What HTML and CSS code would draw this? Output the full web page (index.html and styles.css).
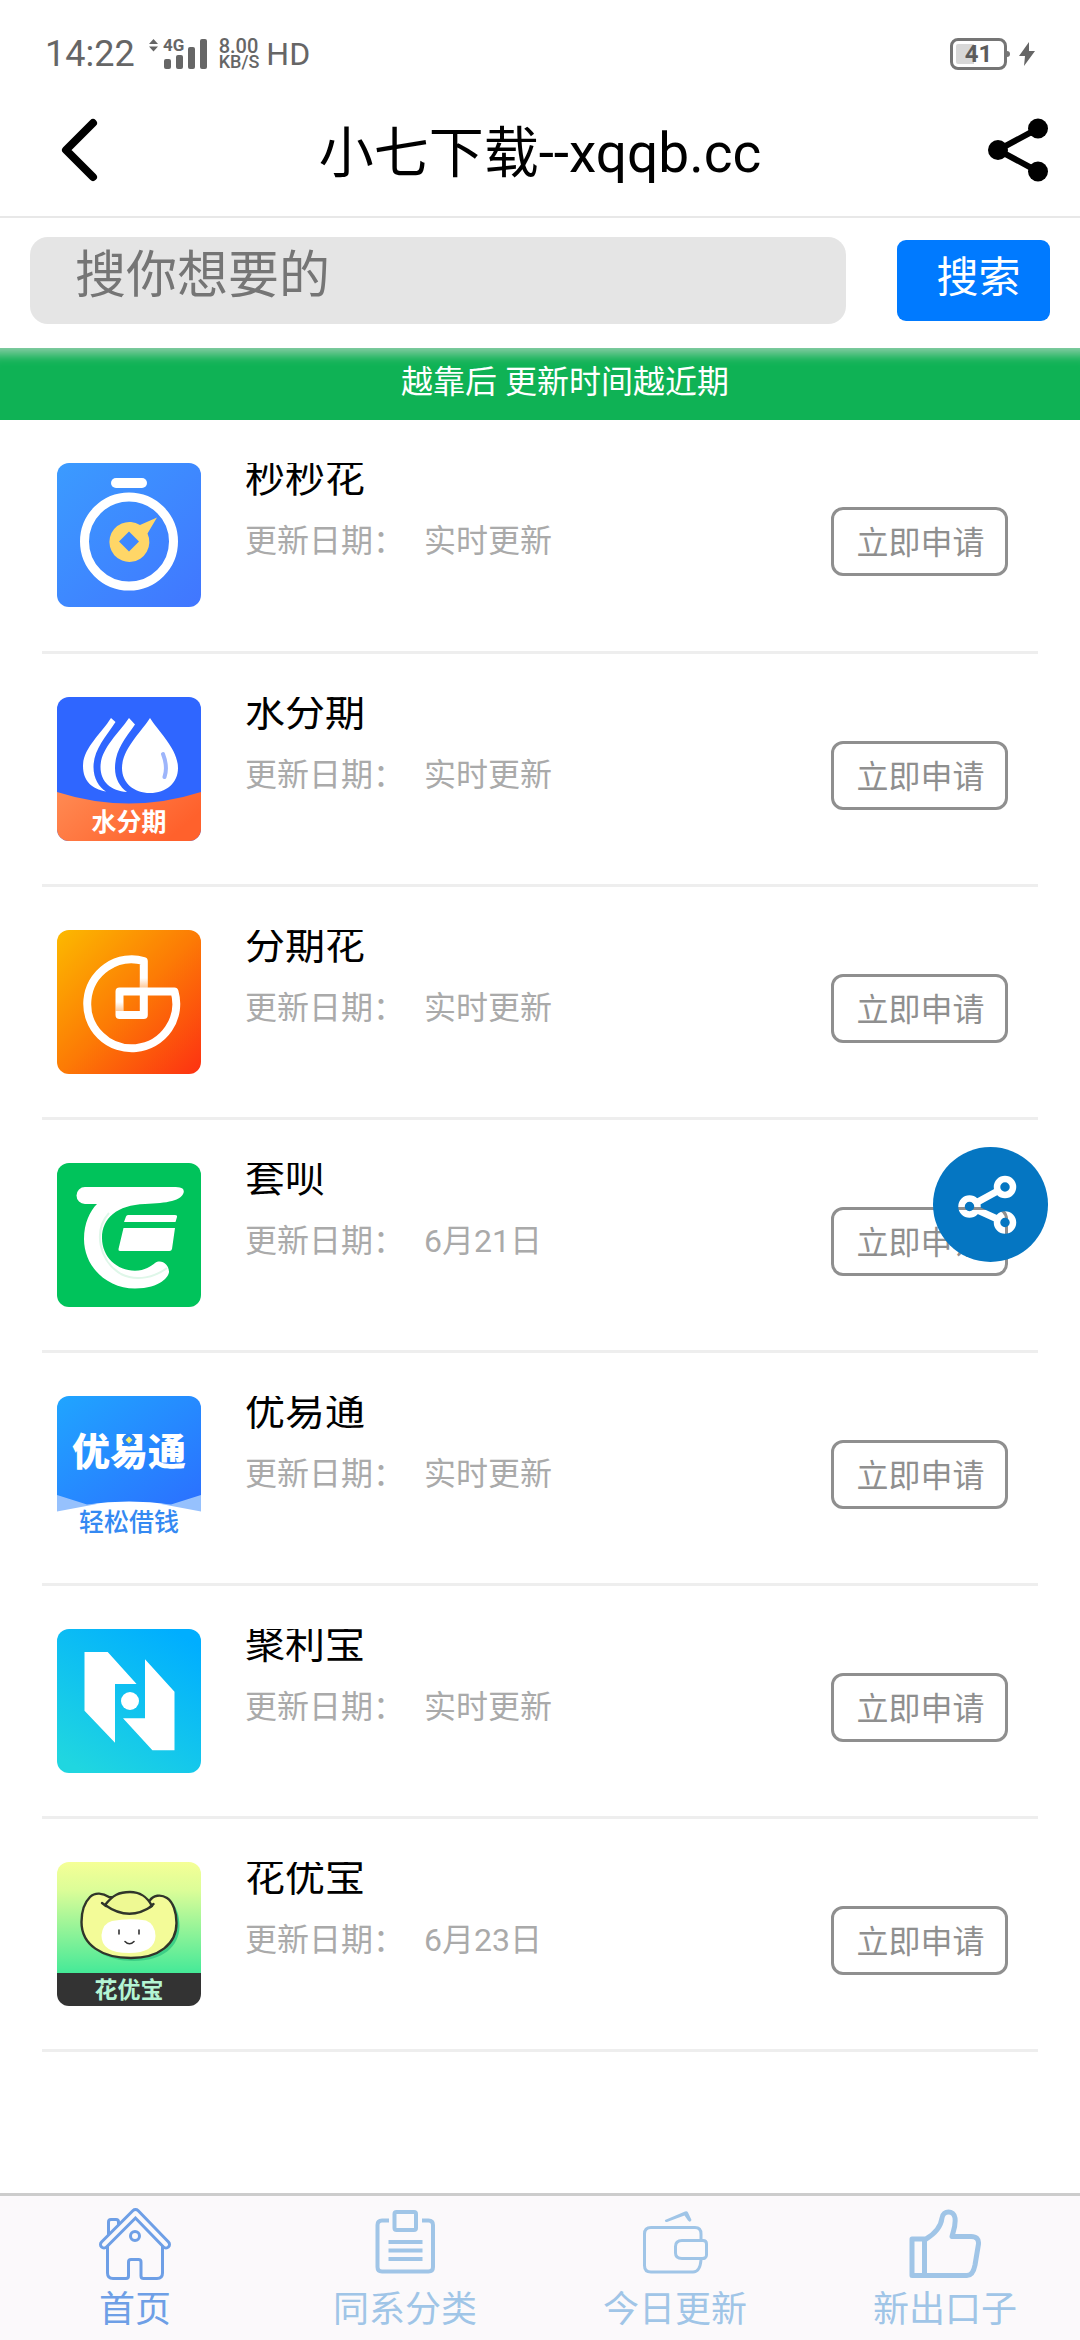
FILE: index.html
```html
<!DOCTYPE html>
<html lang="zh-CN">
<head>
<meta charset="utf-8">
<meta name="viewport" content="width=device-width, initial-scale=1">
<title>小七下载--xqqb.cc</title>
<link rel="stylesheet" href="styles.css">
</head>
<body>
<div class="status">
  <span class="status-time">14:22</span>
  <span class="status-signal">
    <svg width="58" height="32" viewBox="0 0 58 32" aria-hidden="true">
      <path d="M0 6 L4.500 1 L9 6Z M0 8.500 H9 L4.500 13.500Z"/>
      <rect x="15" y="21" width="7" height="10" rx="2"/>
      <rect x="27" y="17" width="7" height="14" rx="2"/>
      <rect x="39" y="9" width="7" height="22" rx="2"/>
      <rect x="51" y="1" width="7" height="30" rx="2"/>
      <text x="14" y="13">4G</text>
    </svg>
  </span>
  <span class="status-speed"><b>8.00</b><span>KB/S</span></span>
  <span class="status-hd">HD</span>
  <span class="battery"><span class="battery-text">41</span></span>
  <svg class="bolt" width="16" height="24" viewBox="0 0 16 24" aria-hidden="true"><path d="M10 0 L0 14 H6 L5 24 L16 9 H10Z"/></svg>
</div>

<header class="nav">
  <button class="nav-btn" type="button" aria-label="返回">
    <svg width="40" height="64" viewBox="0 0 40 64"><path d="M33 5 L6 32 L33 59" fill="none" stroke="#000" stroke-width="8" stroke-linecap="round" stroke-linejoin="round"/></svg>
  </button>
  <h1 class="nav-title">小七下载--xqqb.cc</h1>
  <button class="nav-btn" type="button" aria-label="分享">
    <svg width="60" height="64" viewBox="0 0 60 64"><path d="M50 10.500 L10 32 L50 53.500" fill="none" stroke="#000" stroke-width="6"/><circle cx="50" cy="10.500" r="10"/><circle cx="10" cy="32" r="10"/><circle cx="50" cy="53.500" r="10"/></svg>
  </button>
</header>

<form class="search">
  <input class="search-input" type="text" placeholder="搜你想要的" aria-label="搜你想要的">
  <button class="search-btn" type="button">搜索</button>
</form>

<p class="notice">越靠后 更新时间越近期</p>

<main class="main">
  <ul class="list">
    <li class="item">
      <svg class="logo" viewBox="0 0 144 144" aria-hidden="true">
        <defs><linearGradient id="g1" x1="0" y1="0" x2="1" y2="1"><stop offset="0" stop-color="#3b9bff"/><stop offset="1" stop-color="#4176ff"/></linearGradient></defs>
        <rect width="144" height="144" fill="url(#g1)"/>
        <rect x="54" y="15" width="36" height="10" rx="5" fill="#fff"/>
        <circle cx="72" cy="78.500" r="44.500" fill="none" stroke="#fff" stroke-width="9"/>
        <path fill="#ffd667" fill-rule="evenodd" d="M83 62 L100 54.500 L90.500 70.500 A20 20 0 1 1 83 62Z M72 68.500 L62 78.500 L72 88.500 L82 78.500Z"/>
      </svg>
      <div class="info"><h2 class="name">秒秒花</h2><p class="date"><span>更新日期：</span><span>实时更新</span></p></div>
      <button class="apply" type="button">立即申请</button>
    </li>
    <li class="item">
      <svg class="logo" viewBox="0 0 144 144" aria-hidden="true">
        <defs><linearGradient id="g2" x1="0" y1="0" x2="1" y2="0.400"><stop offset="0" stop-color="#ff8a52"/><stop offset="1" stop-color="#ff612c"/></linearGradient></defs>
        <rect width="144" height="144" fill="#2f66ff"/>
        <path d="M0 95 Q72 118 144 95 V144 H0Z" fill="url(#g2)"/>
        <path fill="#fff" d="M93 21 C101 34 121 52 121 71 C121 86 109 96 93 96 C77 96 65 86 65 71 C65 52 85 34 93 21Z"/>
        <path fill="#fff" d="M72 21 L78 27.500 C67 43 58 54 58 71 C58 82 63 90 70 95 C54 94 43.500 85 43.500 70 C43.500 52 61 37 72 21Z"/>
        <path fill="#fff" d="M54 21 L58.500 25 C48 41 36.500 53 36.500 70 C36.500 82 42 90 49 94.500 C35 92 26 84 26 69 C26 51 44 37 54 21Z"/>
        <path d="M106 57 Q111 70 107.500 80" fill="none" stroke="#9db5fb" stroke-width="4" stroke-linecap="round"/>
        <text class="logo-text logo-text-water" x="72" y="134">水分期</text>
      </svg>
      <div class="info"><h2 class="name">水分期</h2><p class="date"><span>更新日期：</span><span>实时更新</span></p></div>
      <button class="apply" type="button">立即申请</button>
    </li>
    <li class="item">
      <svg class="logo" viewBox="0 0 144 144" aria-hidden="true">
        <defs>
          <linearGradient id="g3" x1="0" y1="0" x2="1" y2="1"><stop offset="0" stop-color="#fcb900"/><stop offset="0.500" stop-color="#fc7b05"/><stop offset="1" stop-color="#fd3112"/></linearGradient>
          <linearGradient id="g3s" x1="0" y1="0" x2="0" y2="1"><stop offset="0" stop-color="#fc7b05" stop-opacity="0"/><stop offset="1" stop-color="#fc7b05" stop-opacity="0.400"/></linearGradient>
        </defs>
        <rect width="144" height="144" fill="url(#g3)"/>
        <path d="M117.500 61.500 H62.500 V85 H86.800 V31 A44.500 44.500 0 1 0 117.500 61.500Z" fill="none" stroke="#fff" stroke-width="8" stroke-linejoin="round"/>
        <rect x="83" y="48" width="8" height="9.500" fill="url(#g3s)"/>
        <rect x="58.500" y="72" width="8" height="9" fill="url(#g3s)"/>
      </svg>
      <div class="info"><h2 class="name">分期花</h2><p class="date"><span>更新日期：</span><span>实时更新</span></p></div>
      <button class="apply" type="button">立即申请</button>
    </li>
    <li class="item">
      <svg class="logo" viewBox="0 0 144 144" aria-hidden="true">
        <rect width="144" height="144" fill="#00c35b"/>
        <path fill="#fff" d="M28 24 H116 C124 24 127 25 126.800 29 C125 38 110 40 88 41 C60 42 45 55 45 75 C45 94 60 107.700 78 107.700 C88 107.700 94 103 98 100 C104 96 112 101 112 109 C112 113 104 125.500 78 125.500 C50 125.500 27 104 27 76 C27 60 33 48 40 41 H28 A8.500 8.500 0 0 1 28 24Z"/>
        <path d="M52 50 C36 68 42 98 64 111 C80 119 98 114 110 105" fill="none" stroke="#dff7e9" stroke-width="2"/>
        <path fill="#fff" d="M71 52 H118 Q120.500 52 120 54 L118.500 59 H67 L69 53.500 Q69.500 52 71 52Z M66.500 65 H118 L115 86 Q114.500 88 112.500 88 H63 Q61 88 61.500 86Z"/>
      </svg>
      <div class="info"><h2 class="name">套呗</h2><p class="date"><span>更新日期：</span><span>6月21日</span></p></div>
      <button class="apply" type="button">立即申请</button>
    </li>
    <li class="item">
      <svg class="logo" viewBox="0 0 144 144" aria-hidden="true">
        <defs><linearGradient id="g5" x1="0" y1="0" x2="1" y2="1"><stop offset="0" stop-color="#20a5ff"/><stop offset="1" stop-color="#2b70ff"/></linearGradient></defs>
        <rect width="144" height="144" fill="#fff"/>
        <path d="M0 98 L40 108 L0 115.500Z M144 98 L104 108 L144 115.500Z" fill="#96c1fd"/>
        <path d="M0 0 H144 V99 L114 108.500 Q72 102.500 30 108.500 L0 99Z" fill="url(#g5)"/>
        <text class="logo-text logo-text-yyt" x="72" y="69">优易通</text>
        <circle cx="72" cy="44" r="6.500" fill="#2686f5"/>
        <path d="M72 40.500 L75.500 44 L72 47.500 L68.500 44Z" fill="#f7ee6a"/>
        <text class="logo-text logo-text-loan" x="72" y="135">轻松借钱</text>
      </svg>
      <div class="info"><h2 class="name">优易通</h2><p class="date"><span>更新日期：</span><span>实时更新</span></p></div>
      <button class="apply" type="button">立即申请</button>
    </li>
    <li class="item">
      <svg class="logo" viewBox="0 0 144 144" aria-hidden="true">
        <defs><linearGradient id="g6" x1="0.800" y1="0" x2="0.200" y2="1"><stop offset="0" stop-color="#00aeff"/><stop offset="1" stop-color="#20d6e0"/></linearGradient></defs>
        <rect width="144" height="144" fill="url(#g6)"/>
        <path fill="#fff" d="M27.500 23 H50.700 L79.600 55 H58 V113.700 L27.500 81.700Z M88 30.300 L117.500 62.700 V121.300 H95.400 L66 89.300 H88Z"/>
        <circle cx="73" cy="72" r="9" fill="#fff"/>
      </svg>
      <div class="info"><h2 class="name">聚利宝</h2><p class="date"><span>更新日期：</span><span>实时更新</span></p></div>
      <button class="apply" type="button">立即申请</button>
    </li>
    <li class="item">
      <svg class="logo" viewBox="0 0 144 144" aria-hidden="true">
        <defs><linearGradient id="g7" x1="0" y1="0" x2="0" y2="1"><stop offset="0" stop-color="#f5ff96"/><stop offset="0.250" stop-color="#dcfd98"/><stop offset="1" stop-color="#43e998"/></linearGradient></defs>
        <rect width="144" height="112" fill="url(#g7)"/>
        <rect y="111" width="144" height="33" fill="#333"/>
        <path transform="translate(3 3)" fill="#3dcf86" d="M52 35 C46 31 38 30 33 35 C27 41 24.500 51 24.500 60 C24.500 83 45 96 74 96 C102 96 119.500 82 119.500 61 C119.500 50 116 40 110 36 C104 32 96 33 92.500 39Z"/>
        <g stroke="#30352a" stroke-width="2.400" stroke-linecap="round" stroke-linejoin="round">
          <path fill="#f3fb98" d="M52 35 C46 31 38 30 33 35 C27 41 24.500 51 24.500 60 C24.500 83 45 96 74 96 C102 96 119.500 82 119.500 61 C119.500 50 116 40 110 36 C104 32 96 33 92.500 39Z"/>
          <path fill="#eef993" d="M48 43 C56 33 62 30 73 30 C84 30 90 35 95 44 Q72 60 48 43Z"/>
          <path fill="none" d="M45 41 L49 44 M96.500 42 L93 45"/>
        </g>
        <path fill="#fff" d="M55 59 Q72 56 89 58.500 Q98 62 98.500 74 Q98 91 72 91 Q44 91 44.500 73 Q46 61 55 59Z"/>
        <path d="M62 68 V72 M82 68 V72 M68 79.500 Q72.500 84 77 79.500" fill="none" stroke="#333" stroke-width="1.600" stroke-linecap="round"/>
        <text class="logo-text logo-text-hyb" x="72" y="136">花优宝</text>
      </svg>
      <div class="info"><h2 class="name">花优宝</h2><p class="date"><span>更新日期：</span><span>6月23日</span></p></div>
      <button class="apply" type="button">立即申请</button>
    </li>
  </ul>
</main>

<button class="fab" type="button" aria-label="分享">
  <svg width="115" height="115" viewBox="0 0 115 115">
    <mask id="cut">
      <rect width="115" height="115" fill="#fff"/>
      <path d="M72 40 L36.500 59.500 L72 75.500" fill="none" stroke="#000" stroke-width="7"/>
      <g fill="#fff" stroke="#000" stroke-width="6.500"><circle cx="72" cy="40" r="8"/><circle cx="36.500" cy="59.500" r="8"/><circle cx="72" cy="75.500" r="8"/></g>
    </mask>
    <circle cx="57.500" cy="57.500" r="57.500" fill="#0576c2" mask="url(#cut)"/>
  </svg>
</button>

<nav class="tabs">
  <a class="tab tab-active" href="#home">
    <svg class="tab-icon" viewBox="0 0 72 72" aria-hidden="true">
      <g fill="none" stroke="currentColor" stroke-width="3">
        <path d="M9.500 27 V14 Q9.500 11.500 12 11.500 H17 Q19.500 11.500 19.500 14 V18"/>
        <path d="M8.500 37 V65 Q8.500 70.500 14 70.500 H27 Q29.500 70.500 29.500 68 V54 Q29.500 51.500 32 51.500 H39.500 Q42 51.500 42 54 V68 Q42 70.500 44.500 70.500 H58 Q63.500 70.500 63.500 65 V37"/>
        <circle cx="36" cy="28" r="4.500"/>
        <path stroke-width="10" stroke-linecap="round" stroke-linejoin="round" d="M5 36.500 L36.500 5 L67 36.500"/>
        <path class="tab-cut" stroke-width="4" stroke-linecap="round" stroke-linejoin="round" d="M5 36.500 L36.500 5 L67 36.500"/>
      </g>
    </svg>
    <span>首页</span>
  </a>
  <a class="tab" href="#category">
    <svg class="tab-icon" viewBox="0 0 72 72" aria-hidden="true">
      <g fill="none" stroke="currentColor" stroke-width="4">
        <path d="M20 12.500 H13 Q8.500 12.500 8.500 17 V59 Q8.500 63.500 13 63.500 H59.500 Q64 63.500 64 59 V17 Q64 12.500 59.500 12.500 H53 M19.500 34 H53.500 M19.500 42.500 H53.500 M19.500 51 H53.500"/>
        <rect x="25.500" y="4" width="21.500" height="18" rx="2"/>
      </g>
    </svg>
    <span>同系分类</span>
  </a>
  <a class="tab" href="#today">
    <svg class="tab-icon" viewBox="0 0 72 72" aria-hidden="true">
      <g fill="none" stroke="currentColor" stroke-width="3">
        <path d="M62 31.500 V26 Q62 19.500 56 19.500 H12 Q5.500 19.500 5.500 26 V57.500 Q5.500 64 12 64 H54 Q61 64 62 52"/>
        <path d="M43 32.500 H64 Q67.500 32.500 67.500 36 V47 Q67.500 51 62 50.500 H43 Q36.500 50.500 36.500 45 V38.500 Q36.500 32.500 43 32.500Z"/>
      </g>
      <path fill="currentColor" d="M26 12 L46 3.500 Q48 2.500 49 4.500 L52.500 12 Q51 15 49 12.500 L45.500 7.500 L28 14 Q25.500 14 26 12Z"/>
    </svg>
    <span>今日更新</span>
  </a>
  <a class="tab" href="#new">
    <svg class="tab-icon" viewBox="0 0 72 72" aria-hidden="true">
      <g fill="none" stroke="currentColor" stroke-width="5" stroke-linejoin="round">
        <path d="M3 31 H17 C27 25 32 18 33 10 C34 2 45 2 46 10 C47 18 44 24 43 28.500 H62 Q70 28.500 69.500 36 L66 57 Q64 67.500 58 67.500 H3Z"/>
        <path d="M15.500 32 V67"/>
      </g>
    </svg>
    <span>新出口子</span>
  </a>
</nav>
</body>
</html>
```

FILE: styles.css
```css
* {
  box-sizing: border-box;
}

body {
  display: flex;
  flex-direction: column;
  min-height: 100vh;
  margin: 0;
  background: #fff;
  color: #000;
  font-family: Roboto, "Noto Sans CJK SC", sans-serif;
}

h1, h2, p, ul {
  margin: 0;
  padding: 0;
  font-weight: 400;
}

button, input {
  font: inherit;
}

button {
  padding: 0;
  border: 0;
  background: none;
  color: inherit;
}

svg {
  display: block;
}

/* Status bar */
.status {
  display: flex;
  align-items: center;
  height: 84px;
  padding: 24px 45px 0;
  color: #666;
  font-size: 36px;
  line-height: 36px;
}

.status svg {
  overflow: visible;
  fill: #666;
}

.status-signal {
  margin-left: 14px;
}

.status-signal text {
  font-size: 17px;
  font-weight: 700;
}

.status-speed {
  display: flex;
  flex-direction: column;
  margin-left: 12px;
  font-size: 18px;
  font-weight: 500;
  line-height: 16px;
}

.status-speed b {
  font-size: 20px;
  font-weight: 500;
}

.status-hd {
  margin-left: 7px;
  font-size: 32px;
}

.battery {
  position: relative;
  width: 57px;
  height: 32px;
  margin-left: auto;
  padding: 3px;
  border: 3px solid #757575;
  border-radius: 8px;
  background: linear-gradient(90deg, #d8d8d8 41%, #fff 41%) content-box;
}

.battery::after {
  content: "";
  position: absolute;
  top: 10px;
  right: -6px;
  width: 3px;
  height: 6px;
  border-radius: 0 3px 3px 0;
  background: #757575;
}

.battery-text {
  display: block;
  color: #5c5c5c;
  font-size: 24px;
  font-weight: 700;
  line-height: 20px;
  text-align: center;
}

.bolt {
  margin-left: 12px;
}

/* Title bar */
.nav {
  display: flex;
  align-items: center;
  justify-content: space-between;
  height: 134px;
  padding: 0 32px 0 60px;
  border-bottom: 2px solid #e8e8e8;
}

.nav-btn {
  display: flex;
  flex: 0 0 60px;
}

.nav-title {
  padding: 5px 28px 0 0;
  font-size: 55px;
  line-height: 64px;
}

/* Search */
.search {
  display: flex;
  align-items: center;
  gap: 51px;
  height: 130px;
  padding: 0 30px 6px;
}

.search-input {
  flex: 1;
  min-width: 0;
  height: 87px;
  padding: 0 45px 10px;
  border: 0;
  border-radius: 18px;
  background: #e5e5e5;
  font-size: 51px;
}

.search-input::placeholder {
  color: #757575;
  opacity: 1;
}

.search-btn {
  width: 153px;
  height: 81px;
  padding: 0 0 14px 10px;
  border-radius: 9px;
  background: #007aff;
  color: #fff;
  font-size: 42px;
}

.notice {
  padding: 10px 0 14px 50px;
  background: #0fb255;
  box-shadow: inset 0 18px 12px -12px #8fceaa;
  color: #fff;
  font-size: 32px;
  line-height: 48px;
  text-align: center;
}

/* App list */
.main {
  flex: 1;
  padding: 0 42px;
}

.list {
  list-style: none;
}

.item {
  display: flex;
  height: 233px;
  padding: 43px 30px 0 15px;
  border-bottom: 3px solid #eee;
}

.item:first-child {
  height: 234px;
}

.logo {
  flex: none;
  width: 144px;
  height: 144px;
  border-radius: 12px;
}

.logo-text {
  font-family: "Noto Sans CJK SC", sans-serif;
  text-anchor: middle;
}

.logo-text-water {
  fill: #fff;
  font-size: 25px;
  font-weight: 700;
}

.logo-text-yyt {
  fill: #fff;
  font-size: 38px;
  font-weight: 900;
}

.logo-text-loan {
  fill: #3489f2;
  font-size: 25px;
  font-weight: 500;
}

.logo-text-hyb {
  fill: #b4f5d4;
  font-size: 23px;
  font-weight: 700;
}

.info {
  flex: 1;
  padding-left: 44px;
}

/* The name sits in a tight line, so its upper edge is cut off level with the logo */
.name {
  overflow: hidden;
  padding-bottom: 12px;
  font-size: 40px;
  line-height: 32px;
}

.date {
  display: flex;
  gap: 19px;
  margin-top: 14px;
  color: #aaa;
  font-size: 32px;
  line-height: 40px;
}

.apply {
  width: 177px;
  height: 69px;
  margin-top: 44px;
  padding: 0 0 3px 2px;
  border: 3px solid #8f8f8f;
  border-radius: 12px;
  color: #8f8f8f;
  font-size: 32px;
}

/* Floating share button */
.fab {
  position: fixed;
  top: 49%;
  right: 32px;
}

/* Bottom tabs */
.tabs {
  display: grid;
  grid-template-columns: repeat(4, 1fr);
  height: 147px;
  padding-top: 12px;
  border-top: 3px solid #ccc;
  background: #fbf9fb;
}

.tab {
  display: flex;
  flex-direction: column;
  align-items: center;
  gap: 8px;
  color: #a0c5e7;
  font-size: 36px;
  line-height: 44px;
  text-decoration: none;
}

.tab-active {
  color: #6e9fe6;
}

.tab-icon {
  width: 72px;
  height: 72px;
}

.tab-cut {
  stroke: #fbf9fb;
}
```
